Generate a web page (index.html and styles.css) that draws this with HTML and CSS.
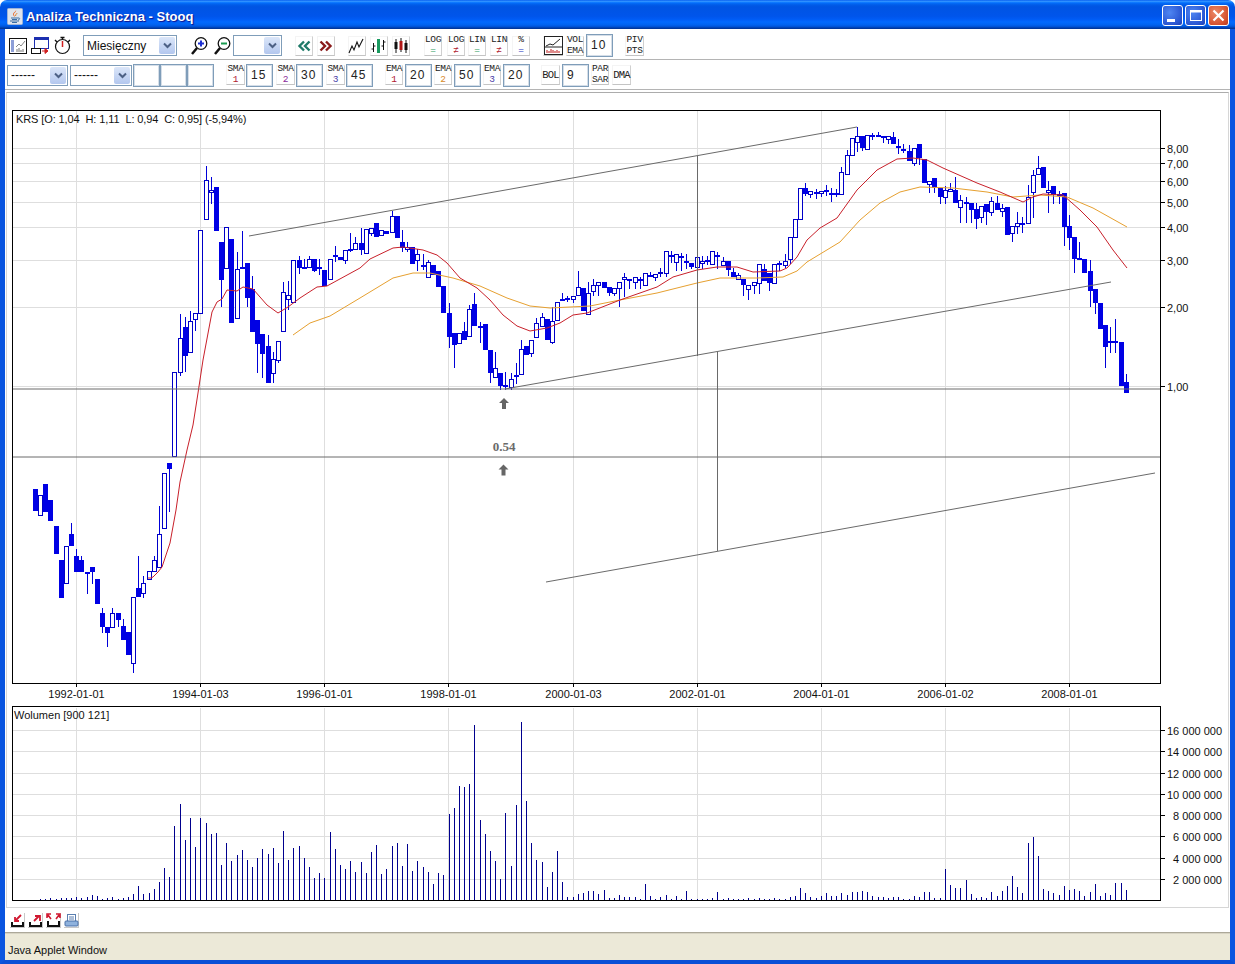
FILE: index.html
```html
<!DOCTYPE html>
<html lang="pl">
<head>
<meta charset="utf-8">
<title>Analiza Techniczna - Stooq</title>
<link rel="stylesheet" href="styles.css">
</head>
<body>
<div class="window">
  <header class="titlebar">
    <svg class="java" width="16" height="17" viewBox="0 0 16 17">
      <rect x="0.5" y="0.5" width="15" height="16" rx="1" fill="#dfe4ec" stroke="#9fb4d8"/>
      <path d="M9 2c1 2-3 3-2 5 .4 1 1 1 1 2-1-1-2.600-2-1.800-3.500C7 4 9 3.500 9 2z" fill="#e8601c"/>
      <path d="M10 5c0 1-2 1.500-1.300 3" stroke="#e8801c" fill="none"/>
      <path d="M4 10h7M5 11.500h5M3 13h9M5 14.500h5" stroke="#3a6ea5" stroke-width="1"/>
      <path d="M11 10c2-.5 2.500 1.500 0 2" stroke="#3a6ea5" fill="none"/>
    </svg>
    <div class="title">Analiza Techniczna - Stooq</div>
    <div class="caption-btns">
      <div class="cap"><svg width="21" height="21" viewBox="0 0 21 21"><rect x="5" y="14" width="8" height="3" fill="#fff"/></svg></div>
      <div class="cap"><svg width="21" height="21" viewBox="0 0 21 21"><rect x="5.500" y="5.500" width="11" height="10" fill="none" stroke="#fff"/><rect x="5" y="5" width="12" height="2.500" fill="#fff"/></svg></div>
      <div class="cap close"><svg width="21" height="21" viewBox="0 0 21 21"><path d="M5.500 5.500l10 10M15.500 5.500l-10 10" stroke="#fff" stroke-width="2.200"/></svg></div>
    </div>
  </header>
  <div class="client">
    <div class="toolbar row-one">
      <div class="btn w19"><svg width="19" height="18" viewBox="0 0 19 18"><rect x="0.500" y="1.500" width="17" height="15" fill="#fff" stroke="#111"/><path d="M2 4h3M2 6h3M2 8h3M2 10h3M2 12h3M2 14h3" stroke="#1c3fb0"/><path d="M7 10l3-3 2 2 4-5" stroke="#888" fill="none"/><path d="M8 15v-3M10 15v-4M12 15v-2M14 15v-3" stroke="#777"/></svg></div>
      <div class="btn w19 m3"><svg width="19" height="19" viewBox="0 0 19 19"><rect x="3.500" y="1.500" width="14" height="11" fill="#fff" stroke="#1c2fb0"/><rect x="3" y="1" width="15" height="3" fill="#1c2fb0"/><rect x="0.500" y="12.500" width="9" height="5" fill="#fff" stroke="#111"/><path d="M11 15h5M14 12.500l3 2.500-3 2.500z" stroke="#d02020" fill="#d02020"/></svg></div>
      <div class="btn w19 m3"><svg width="19" height="19" viewBox="0 0 19 19"><circle cx="9.500" cy="10.500" r="7" fill="#fff" stroke="#111" stroke-width="1.200"/><path d="M9.500 5v6" stroke="#d02020" stroke-width="1.500"/><path d="M7.500 1.500h4M9.500 1.500v2M2 4l2 2M17 4l-2 2" stroke="#111" stroke-width="1.400"/></svg></div>
      <div class="combo w94 m11"><span class="combo-text">Miesięczny</span><span class="arrow"><svg width="9" height="7" viewBox="0 0 9 7"><path d="M1 1.500l3.500 3.500 3.500-3.500" fill="none" stroke="#4d6185" stroke-width="2"/></svg></span></div>
      <div class="btn w18 m13"><svg width="18" height="20" viewBox="0 0 18 20"><path d="M7 12l-5 6" stroke="#111" stroke-width="2.500"/><circle cx="11" cy="7.500" r="5.800" fill="#fff" stroke="#111" stroke-width="1.300"/><path d="M8 7.500h6M11 4.500v6" stroke="#1c2fd0" stroke-width="2"/></svg></div>
      <div class="btn w18 m5"><svg width="18" height="20" viewBox="0 0 18 20"><path d="M7 12l-5 6" stroke="#111" stroke-width="2.500"/><circle cx="11" cy="7.500" r="5.800" fill="#fff" stroke="#111" stroke-width="1.300"/><path d="M8 7.500h6" stroke="#1a9a50" stroke-width="2"/></svg></div>
      <div class="combo w49 m2"><span class="combo-text"></span><span class="arrow"><svg width="9" height="7" viewBox="0 0 9 7"><path d="M1 1.500l3.500 3.500 3.500-3.500" fill="none" stroke="#4d6185" stroke-width="2"/></svg></span></div>
      <div class="btn w18 m13 bevel"><svg width="14" height="12" viewBox="0 0 14 12"><path d="M7 1.500L2.500 6 7 10.500M12.500 1.500L8 6l4.500 4.500" fill="none" stroke="#1f7a68" stroke-width="2.400"/></svg></div>
      <div class="btn w18 m4 bevel"><svg width="14" height="12" viewBox="0 0 14 12"><path d="M1.500 1.500L6 6l-4.500 4.500M7 1.500L11.500 6 7 10.500" fill="none" stroke="#8a1a1a" stroke-width="2.400"/></svg></div>
      <div class="btn w18 m13 bevel"><svg width="18" height="18" viewBox="0 0 18 18"><path d="M1 16l3-7 2 4 3-8 2 5 4-8" fill="none" stroke="#111" stroke-width="1.100"/></svg></div>
      <div class="btn w18 m4 bevel"><svg width="18" height="18" viewBox="0 0 18 18"><path d="M3.500 6v9M1.500 12h2M3.500 9h2M13.500 3v10M11.500 9h2M13.500 5h2" stroke="#111" fill="none"/><rect x="7" y="2" width="3" height="14" fill="#1a9a60"/></svg></div>
      <div class="btn w18 m4 bevel"><svg width="18" height="18" viewBox="0 0 18 18"><path d="M4 2v14M9 1v14M14 3v13" stroke="#111"/><rect x="2.500" y="5" width="3" height="7" fill="#111"/><rect x="7.500" y="4" width="3" height="9" fill="#b01818"/><rect x="12.500" y="6" width="3" height="7" fill="#111"/></svg></div>
      <div class="btn w18 m14 bevel text"><span>LOG</span><span class="green">=</span></div>
      <div class="btn w18 m5 bevel text"><span>LOG</span><span class="red">≠</span></div>
      <div class="btn w18 m3 bevel text"><span>LIN</span><span class="green">=</span></div>
      <div class="btn w18 m4 bevel text"><span>LIN</span><span class="red">≠</span></div>
      <div class="btn w18 m4 bevel text"><span>%</span><span class="blue">=</span></div>
      <div class="btn w20 m13 bevel"><svg width="19" height="19" viewBox="0 0 19 19"><rect x="0.500" y="0.500" width="18" height="18" fill="#fff" stroke="#222"/><path d="M2 10l4-2 3 1 7-6" fill="none" stroke="#222"/><path d="M1 11h17" stroke="#222"/><path d="M3 17v-3M5 17v-2M7 17v-4M9 17v-3M11 17v-2M13 17v-3M15 17v-2" stroke="#c01818"/></svg></div>
      <div class="btn w18 m3 bevel text"><span>VOL</span><span>EMA</span></div>
      <div class="field m2">10</div>
      <div class="btn w19 m12 bevel text"><span>PIV</span><span>PTS</span></div>
    </div>
    <div class="toolbar row-two">
      <div class="combo w61"><span class="combo-text">------</span><span class="arrow"><svg width="9" height="7" viewBox="0 0 9 7"><path d="M1 1.500l3.500 3.500 3.500-3.500" fill="none" stroke="#4d6185" stroke-width="2"/></svg></span></div>
      <div class="combo w62 m2"><span class="combo-text">------</span><span class="arrow"><svg width="9" height="7" viewBox="0 0 9 7"><path d="M1 1.500l3.500 3.500 3.500-3.500" fill="none" stroke="#4d6185" stroke-width="2"/></svg></span></div>
      <div class="field m1"></div>
      <div class="field"></div>
      <div class="field"></div>
      <div class="btn w19 m12 bevel text"><span>SMA</span><span class="red">1</span></div>
      <div class="field m1">15</div>
      <div class="btn w19 m3 bevel text"><span>SMA</span><span class="purple">2</span></div>
      <div class="field m1">30</div>
      <div class="btn w19 m3 bevel text"><span>SMA</span><span class="indigo">3</span></div>
      <div class="field m1">45</div>
      <div class="btn w18 m12 bevel text"><span>EMA</span><span class="red">1</span></div>
      <div class="field m2">20</div>
      <div class="btn w18 m2 bevel text"><span>EMA</span><span class="orange">2</span></div>
      <div class="field m2">50</div>
      <div class="btn w18 m2 bevel text"><span>EMA</span><span class="indigo">3</span></div>
      <div class="field m2">20</div>
      <div class="btn w19 m11 bevel text single"><span>BOL</span></div>
      <div class="field m2">9</div>
      <div class="btn w18 m2 bevel text"><span>PAR</span><span>SAR</span></div>
      <div class="btn w19 m3 bevel text single"><span>DMA</span></div>
    </div>
    <main class="panel">
      <svg class="chart" width="1221" height="612" viewBox="7 93 1221 612">
        <g class="grid">
          <path d="M13 148.500H1160M13 163.500H1160M13 181.500H1160M13 202.500H1160M13 227.500H1160M13 260.500H1160M13 307.500H1160M13 386.500H1160"/>
          <path d="M76.500 111V683M200.500 111V683M324.500 111V683M448.500 111V683M573.500 111V683M697.500 111V683M821.500 111V683M945.500 111V683M1069.500 111V683"/>
        </g>
        <rect class="frame" x="12.500" y="110.500" width="1148" height="573"/>
        <path class="ticks" d="M1160 148.500h5M1160 163.500h5M1160 181.500h5M1160 202.500h5M1160 227.500h5M1160 260.500h5M1160 307.500h5M1160 386.500h5M76.500 683v4M200.500 683v4M324.500 683v4M448.500 683v4M573.500 683v4M697.500 683v4M821.500 683v4M945.500 683v4M1069.500 683v4"/>
        <g id="candles"></g>
        <g id="averages"></g>
        <path class="tools" d="M13 389H1160M13 457H1160"/>
        <path class="tools" d="M249 236L857 127M505 389L1111 282M546 582L1155 473"/>
        <path class="tools" d="M697.500 156V356M717.500 352V551"/>
        <path class="arrow-mark" d="M504 398l5 5h-3v6h-4v-6h-3z"/>
        <path class="arrow-mark" d="M503.500 464.500l5 5h-3v6h-4v-6h-3z"/>
        <text class="mark-label" x="504" y="451">0.54</text>
        <text class="label head" x="16" y="123" xml:space="preserve">KRS [O: 1,04  H: 1,11  L: 0,94  C: 0,95] (-5,94%)</text>
        <g class="label">
          <text x="1167" y="153">8,00</text><text x="1167" y="168">7,00</text><text x="1167" y="186">6,00</text><text x="1167" y="207">5,00</text><text x="1167" y="232">4,00</text><text x="1167" y="265">3,00</text><text x="1167" y="312">2,00</text><text x="1167" y="391">1,00</text>
        </g>
        <g class="label centered">
          <text x="76.500" y="698">1992-01-01</text><text x="200.500" y="698">1994-01-03</text><text x="324.500" y="698">1996-01-01</text><text x="448.500" y="698">1998-01-01</text><text x="573.500" y="698">2000-01-03</text><text x="697.500" y="698">2002-01-01</text><text x="821.500" y="698">2004-01-01</text><text x="945.500" y="698">2006-01-02</text><text x="1069.500" y="698">2008-01-01</text>
        </g>
      </svg>
      <svg class="chart" width="1221" height="201" viewBox="7 705 1221 201">
        <g class="grid">
          <path d="M13 730.500H1160M13 751.500H1160M13 773.500H1160M13 794.500H1160M13 815.500H1160M13 836.500H1160M13 858.500H1160M13 879.500H1160"/>
          <path d="M76.500 708V900M200.500 708V900M324.500 708V900M448.500 708V900M573.500 708V900M697.500 708V900M821.500 708V900M945.500 708V900M1069.500 708V900"/>
        </g>
        <g id="volume"></g>
        <rect class="frame" x="12.500" y="706.500" width="1148" height="194"/>
        <path class="ticks" d="M1160 730.500h5M1160 751.500h5M1160 773.500h5M1160 794.500h5M1160 815.500h5M1160 836.500h5M1160 858.500h5M1160 879.500h5"/>
        <text class="label" x="14" y="719">Wolumen [900 121]</text>
        <g class="label">
          <text x="1167" y="735">16 000 000</text><text x="1167" y="756">14 000 000</text><text x="1167" y="778">12 000 000</text><text x="1167" y="799">10 000 000</text><text x="1173" y="820">8 000 000</text><text x="1173" y="841">6 000 000</text><text x="1173" y="863">4 000 000</text><text x="1173" y="884">2 000 000</text>
        </g>
      </svg>
    </main>
    <div class="bottombar">
      <div class="bbtn"><svg width="15" height="15" viewBox="0 0 15 15"><path d="M2 9v4h11V9" fill="none" stroke="#111" stroke-width="2"/><path d="M11 2L6 7M5 4v4h4" fill="none" stroke="#d01830" stroke-width="1.800"/></svg></div>
      <div class="bbtn"><svg width="15" height="15" viewBox="0 0 15 15"><path d="M2 9v4h11V9" fill="none" stroke="#111" stroke-width="2"/><path d="M6 8l5-5M7 3h5v5" fill="none" stroke="#d01830" stroke-width="1.800"/></svg></div>
      <div class="bbtn"><svg width="15" height="15" viewBox="0 0 15 15"><path d="M2 8v5h11V8" fill="none" stroke="#111" stroke-width="2"/><path d="M2 2l3 4M1 5V1h4M13 2l-3 4M14 5V1h-4" fill="none" stroke="#d01830" stroke-width="1.600"/></svg></div>
      <div class="bbtn"><svg width="15" height="15" viewBox="0 0 15 15"><rect x="3.500" y="1.500" width="8" height="7" fill="#fff" stroke="#5a7fb0"/><path d="M5 4h5M5 6h5" stroke="#5a7fb0"/><rect x="1" y="8" width="13" height="5" rx="1" fill="#8fb2dd" stroke="#4a70a8"/></svg></div>
    </div>
    <footer class="status">Java Applet Window</footer>
  </div>
</div>
<script src="chart.js"></script>
</body>
</html>
```

FILE: styles.css
```css
* { box-sizing: border-box; }
html, body { margin: 0; padding: 0; background: #fff; }
body { font-family: "Liberation Sans", Arial, sans-serif; }
.window { width: 1235px; height: 964px; display: flex; flex-direction: column; overflow: hidden; }

.titlebar {
  height: 29px; flex: none; display: flex; align-items: center; padding: 0 7px;
  border-radius: 7px 7px 0 0;
  background: linear-gradient(#0058ee 0, #3593ff 4%, #288eff 6%, #127dff 8%, #036ffc 10%, #0262ee 14%, #0057e5 20%, #0054e3 24%, #0055eb 56%, #005bf5 66%, #026afe 76%, #0062ef 86%, #0052d6 92%, #0040ab 96%, #003092 100%);
}
.java { flex: none; margin-top: 3px; }
.title { margin-left: 3px; margin-top: 4px; color: #fff; font-weight: bold; font-size: 13px; text-shadow: 1px 1px 1px #0f1089; letter-spacing: 0; white-space: nowrap; }
.caption-btns { margin-left: auto; display: flex; gap: 2px; margin-right: -1px; margin-top: 2px; }
.cap { width: 21px; height: 21px; border: 1px solid #fff; border-radius: 3px; background: radial-gradient(circle at 35% 35%, #4f86f2, #2a56d2 70%, #1b3fb5); overflow: hidden; }
.cap svg { display: block; margin: -1px; }
.cap.close { background: radial-gradient(circle at 35% 35%, #ec8a68, #d5512e 70%, #b53a1e); }

.client { flex: 1; min-height: 0; display: flex; flex-direction: column; background: #fff; border-left: 5px solid #0a55e0; border-right: 5px solid #0a55e0; border-bottom: 4px solid #0a4fd6; }

.toolbar { display: flex; align-items: center; flex: none; border-bottom: 1px solid #b4b4b4; background: #fff; }
.row-one { height: 31px; padding: 3px 0 0 4px; }
.row-two { height: 30px; padding: 1px 0 0 2px; margin-bottom: 2px; }

.m1 { margin-left: 1px; } .m2 { margin-left: 2px; } .m3 { margin-left: 3px; } .m4 { margin-left: 4px; } .m5 { margin-left: 5px; }
.m11 { margin-left: 11px; } .m12 { margin-left: 12px; } .m13 { margin-left: 13px; } .m14 { margin-left: 14px; }
.w18 { width: 18px; } .w19 { width: 19px; } .w20 { width: 20px; } .w49 { width: 49px; } .w61 { width: 61px; } .w62 { width: 62px; } .w94 { width: 94px; }

.btn { flex: none; height: 20px; display: flex; align-items: center; justify-content: center; }
.btn svg { display: block; flex: none; }
.bevel { border-right: 1px solid #d0d0d0; border-bottom: 1px solid #c4c4c4; border-top: 1px solid #f4f4f4; border-left: 1px solid #f4f4f4; }
.text { flex-direction: column; font-family: "Liberation Mono", "DejaVu Sans Mono", monospace; font-size: 9.5px; line-height: 10.8px; color: #222; font-weight: normal; }
.text span { display: block; text-align: center; letter-spacing: -0.4px; white-space: nowrap; }
.text.single span { font-size: 10.5px; letter-spacing: -0.8px; }
.green { color: #1f9a60; } .red { color: #b01830; } .blue { color: #2030c0; } .purple { color: #8a2a9a; } .indigo { color: #4a40a8; } .orange { color: #d88a28; }

.field { flex: none; width: 27px; height: 23px; border: 1px solid #7f9db9; box-shadow: inset 0 0 0 1px #d5dee8; background: #fff; font-size: 12px; line-height: 21px; padding-left: 4px; color: #222; letter-spacing: 1px; }

.combo { flex: none; height: 21px; display: flex; align-items: center; border: 1px solid #7f9db9; background: #fff; padding: 1px; }
.combo-text { flex: 1; font-size: 12px; padding-left: 2px; color: #111; white-space: nowrap; overflow: hidden; letter-spacing: 0; }
.arrow { flex: none; width: 16px; height: 100%; border-radius: 2px; background: linear-gradient(#dbe6f9, #b3c7ee); display: flex; align-items: center; justify-content: center; }
.arrow svg { display: block; }

.panel { flex: 1; min-height: 0; margin: 0 1px; border: 1px solid #d6d6d6; border-top-color: #acacac; overflow: hidden; }
.chart { display: block; }
.grid path { fill: none; stroke: #dedede; stroke-width: 1; shape-rendering: crispEdges; }
.frame { fill: none; stroke: #000; stroke-width: 1; shape-rendering: crispEdges; }
.ticks { fill: none; stroke: #000; stroke-width: 1; shape-rendering: crispEdges; }
.tools { fill: none; stroke: #6a6a6a; stroke-width: 1; }
.arrow-mark { fill: #666; }
.mark-label { font-family: "Liberation Serif", serif; font-weight: bold; font-size: 13px; fill: #6a6a6a; text-anchor: middle; }
.label, .label text { font-family: "Liberation Sans", Arial, sans-serif; font-size: 11px; fill: #111; }
.head { letter-spacing: -0.1px; }
.centered text { text-anchor: middle; }
.candle-w { stroke: #0000d8; stroke-width: 1; shape-rendering: crispEdges; fill: none; }
.candle-f { fill: #0000e4; shape-rendering: crispEdges; }
.candle-h { fill: #fff; stroke: #0000c8; stroke-width: 1; shape-rendering: crispEdges; }
.ma { fill: none; stroke-width: 1; }
.ma-red { stroke: #c8202a; }
.ma-orange { stroke: #e6a030; }
.vol { stroke: #00008e; stroke-width: 1; fill: none; shape-rendering: crispEdges; }

.bottombar { flex: none; height: 25px; display: flex; align-items: flex-start; gap: 3px; padding: 5px 0 0 5px; border-bottom: 1px solid #aca899; background: #fff; }
.bbtn { width: 15px; height: 15px; border-right: 1px solid #c8c8c8; border-bottom: 1px solid #c8c8c8; }
.bbtn svg { display: block; }
.status { flex: none; height: 27px; background: #ece9d8; border-top: 1px solid #d8d4c4; font-size: 11px; line-height: 33px; padding-left: 3px; color: #111; white-space: nowrap; }
```

FILE: chart.js
```javascript
var NS = 'http://www.w3.org/2000/svg';
var cx = function (i) { return Math.round(34.9 + 5.17 * i); };

/* each candle: wick top, body top, body bottom, wick bottom, filled (page pixels; 0 = no wick) */
var candles = [
[0,489,511,0,1],[0,495,515,0,0],[0,484,512,0,1],[0,500,521,0,1],[0,526,554,0,1],[0,560,598,0,1],[0,546,583,0,0],[523,534,546,0,1],
[549,556,572,0,1],[556,560,572,0,1],[0,572,573,594,1],[0,567,572,584,1],[0,579,604,0,1],[608,613,627,633,1],[0,627,633,647,1],[608,613,627,0,0],
[0,613,620,627,1],[619,626,640,0,1],[0,632,655,0,1],[0,597,663,673,0],[556,588,597,0,1],[576,583,593,598,0],[0,571,579,0,0],[556,560,571,0,0],
[506,534,567,0,0],[0,473,528,0,0],[0,463,469,512,1],[0,372,456,0,0],[314,338,372,376,0],[317,327,356,372,1],[311,321,352,0,0],[0,313,319,331,0],
[0,230,313,0,0],[166,180,219,0,0],[177,190,192,204,0],[0,187,231,0,1],[0,242,280,307,1],[0,227,268,0,0],[0,239,323,0,1],[252,269,318,0,0],
[231,267,268,0,1],[0,263,298,307,1],[276,289,332,0,1],[0,320,344,373,1],[0,334,354,378,1],[335,346,383,0,1],[352,359,373,383,0],[0,341,360,363,0],
[282,292,331,332,0],[281,295,299,310,0],[0,260,302,0,0],[256,260,268,274,1],[259,267,268,0,1],[256,259,267,0,0],[0,259,271,272,1],[259,267,268,275,1],
[0,270,286,0,1],[0,259,279,0,0],[246,255,256,262,1],[0,257,260,0,1],[0,250,260,264,0],[233,249,250,252,1],[237,243,249,0,0],[228,243,250,255,1],
[0,229,253,0,0],[0,228,233,236,0],[0,223,237,0,1],[0,230,235,0,0],[0,231,234,0,1],[211,216,232,0,0],[0,216,238,0,1],[230,242,248,252,1],
[242,247,249,252,0],[0,247,264,0,1],[249,254,260,271,0],[254,265,267,270,1],[260,262,277,0,0],[0,265,275,0,1],[0,271,287,0,1],[0,286,313,0,1],
[303,313,337,348,1],[0,333,345,368,1],[0,333,343,0,0],[322,331,340,0,1],[305,309,336,0,0],[293,304,326,0,1],[322,326,327,343,1],[0,324,350,0,1],
[0,350,373,383,1],[352,368,377,0,0],[0,373,386,390,1],[372,385,386,390,1],[373,379,387,390,0],[363,375,377,384,1],[340,349,374,0,0],[0,346,355,0,1],
[0,340,353,357,0],[318,323,337,0,0],[313,317,326,0,0],[0,319,340,0,1],[307,321,342,344,0],[0,302,320,0,0],[293,299,300,0,1],[296,298,299,302,1],
[0,296,299,303,0],[271,287,295,0,0],[0,288,311,0,1],[282,293,314,0,0],[279,285,291,296,0],[0,282,285,296,0],[0,282,288,0,1],[0,287,293,296,1],
[0,288,293,296,0],[0,282,288,307,0],[273,277,279,297,0],[0,279,280,289,1],[0,277,282,289,0],[277,279,280,289,1],[0,273,285,0,0],[272,275,276,277,1],
[0,274,277,281,0],[268,272,273,277,0],[0,251,273,277,0],[251,255,256,263,1],[0,254,262,271,0],[253,256,257,271,1],[254,261,262,269,1],[0,263,267,269,1],
[0,257,267,0,0],[256,261,263,269,0],[256,260,261,265,1],[0,251,264,0,0],[252,255,257,269,1],[257,261,265,0,0],[0,261,270,276,1],[268,272,277,0,1],
[273,275,279,0,0],[0,279,285,296,1],[0,285,289,300,0],[0,282,285,294,0],[0,264,283,294,0],[264,269,281,0,1],[0,273,283,291,1],[0,264,283,0,0],
[261,263,264,271,1],[254,261,265,268,0],[0,237,259,264,0],[0,219,237,0,0],[0,188,219,0,0],[183,188,194,196,1],[0,191,194,198,0],[189,192,193,199,1],
[0,191,193,197,0],[185,190,192,196,1],[188,193,194,202,1],[189,193,194,197,1],[167,172,194,0,0],[150,155,174,0,0],[0,138,155,0,0],[127,136,142,152,0],
[0,136,148,151,1],[0,135,149,0,0],[133,135,136,140,1],[132,135,136,137,1],[0,136,137,143,1],[0,136,139,144,0],[132,137,144,0,1],[139,146,147,154,1],
[144,149,150,153,1],[145,151,161,0,1],[0,148,163,166,0],[0,144,158,165,1],[0,159,183,0,1],[0,181,184,193,0],[0,178,188,193,1],[0,188,197,204,1],
[186,190,197,204,0],[183,189,191,0,0],[177,190,203,0,1],[195,200,207,223,0],[197,202,203,223,1],[0,203,210,223,1],[203,209,219,229,1],[0,206,217,223,0],
[0,204,212,225,1],[197,201,212,216,0],[196,203,210,0,1],[204,208,211,217,0],[0,207,235,0,1],[0,226,233,242,0],[212,223,226,234,0],[217,223,224,233,1],
[185,197,223,0,0],[170,175,192,218,0],[156,168,174,0,0],[0,167,188,0,1],[181,190,192,213,0],[0,186,195,204,1],[191,194,195,204,1],[0,193,227,246,1],
[215,226,238,250,1],[0,237,259,273,1],[242,258,259,0,1],[0,259,273,0,1],[260,271,291,307,1],[0,289,303,314,1],[0,303,329,0,1],[0,325,347,368,1],
[327,341,342,353,1],[319,341,343,353,1],[0,342,386,0,1],[374,382,393,0,1]
];

/* top of each volume bar, first value is candle 1 */
var volumes = [
899,899,898,899,898,898,898,897,898,897,895,896,899,898,897,899,898,897,894,886,
894,893,889,882,868,877,826,804,840,818,847,818,823,834,833,865,843,861,855,850,
860,867,858,849,854,848,863,831,860,848,846,858,867,878,873,878,832,849,865,869,
861,872,862,873,852,845,874,869,846,843,866,844,871,861,867,872,884,873,875,814,
808,786,787,784,725,820,834,851,861,879,813,866,805,722,801,843,860,862,887,872,
851,882,897,897,894,893,891,891,894,890,
898,898,895,897,897,897,899,884,896,899,897,895,899,896,899,891,899,899,899,
899,898,892,899,898,899,899,899,898,899,898,899,899,898,899,899,
897,896,888,893,897,898,896,893,896,896,893,895,892,892,891,892,896,897,897,898,
897,897,899,899,896,897,892,892,898,898,
869,885,888,888,880,894,898,897,898,892,896,891,886,876,887,893,843,837,856,889,
891,893,895,886,890,889,891,896,892,884,896,893,895,883,883,890
];

var red = '148,578 151,578 153,577 158,572 162,567 170,543 176,510 180,482 187,450 193,425 198,393 203,360 212,312 217,302 222,299 227,290 237,291 243,287 253,289 267,305 278,313 288,307 300,298 317,287 327,286 360,268 370,259 393,248 403,247 423,250 437,255 447,263 460,278 477,288 490,300 503,315 517,326 530,331 547,328 560,323 573,315 587,313 620,300 657,287 673,277 697,270 717,267 737,267 753,272 780,271 787,268 797,257 807,240 820,228 837,218 857,190 877,170 897,159 913,158 927,160 943,168 977,183 1000,192 1023,202 1033,197 1043,194 1063,195 1080,210 1097,227 1113,250 1127,268';
var orange = '293,335 310,323 330,316 360,298 393,278 413,273 430,273 453,278 480,286 507,298 530,306 550,308 590,306 620,300 657,293 697,283 720,278 757,278 783,277 797,271 807,262 840,242 860,220 880,203 900,192 920,187 953,188 987,192 1013,197 1040,195 1067,197 1093,208 1127,227';

function el(name, attrs) {
  var e = document.createElementNS(NS, name);
  for (var k in attrs) e.setAttribute(k, attrs[k]);
  return e;
}

var candleGroup = document.getElementById('candles');
candles.forEach(function (c, i) {
  var x = cx(i), wt = c[0] || c[1], wb = c[3] || c[2];
  candleGroup.appendChild(el('path', { 'class': 'candle-w', d: 'M' + (x + 0.5) + ' ' + wt + 'V' + wb }));
  if (c[4]) {
    candleGroup.appendChild(el('rect', { 'class': 'candle-f', x: x - 2, y: c[1], width: 5, height: Math.max(c[2] - c[1], 2) }));
  } else {
    candleGroup.appendChild(el('rect', { 'class': 'candle-h', x: x - 1.5, y: c[1] + 0.5, width: 4, height: c[2] - c[1] }));
  }
});

var maGroup = document.getElementById('averages');
maGroup.appendChild(el('polyline', { 'class': 'ma ma-orange', points: orange }));
maGroup.appendChild(el('polyline', { 'class': 'ma ma-red', points: red }));

var volGroup = document.getElementById('volume');
volumes.forEach(function (top, n) {
  var x = cx(n + 1);
  volGroup.appendChild(el('path', { 'class': 'vol', d: 'M' + (x + 0.5) + ' ' + top + 'V900' }));
});
```
